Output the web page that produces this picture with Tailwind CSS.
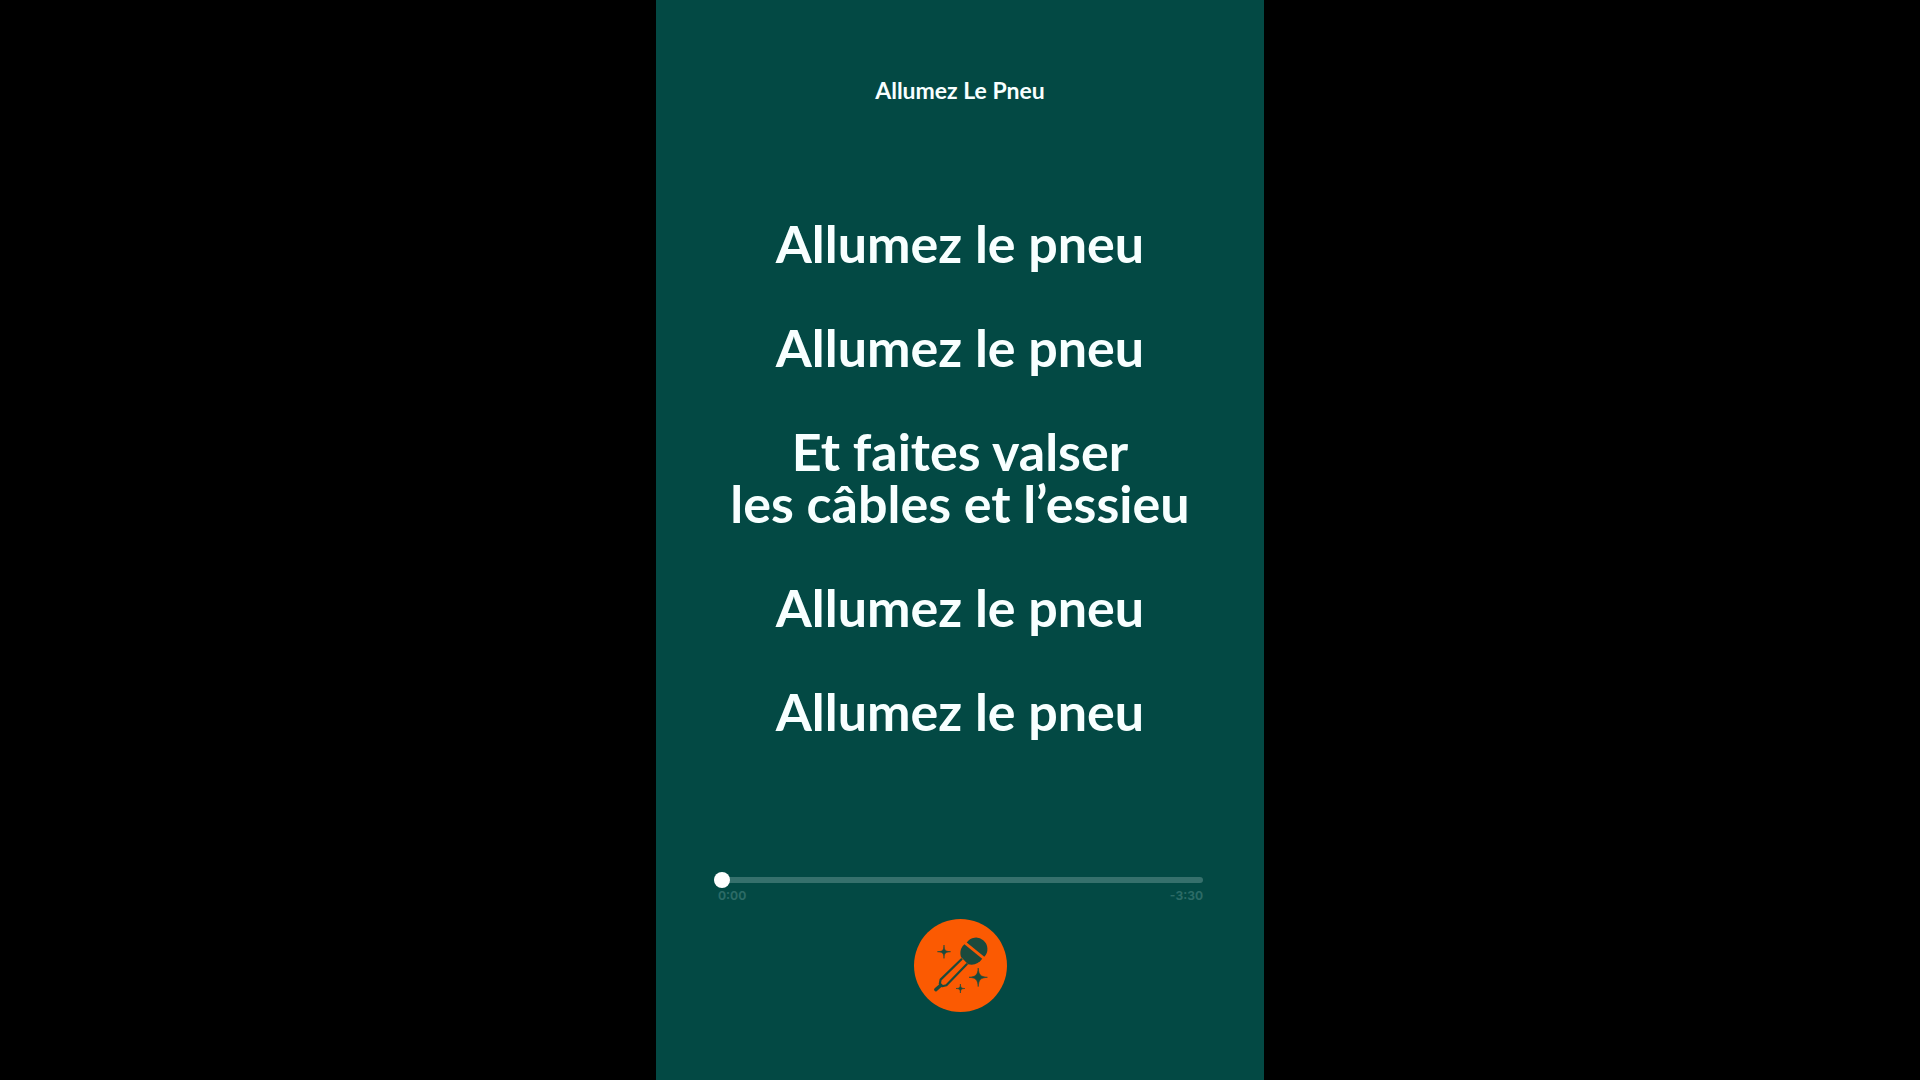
<!DOCTYPE html>
<html lang="fr">
<head>
  <meta charset="UTF-8" />
  <meta name="viewport" content="width=device-width, initial-scale=1.0" />
  <title>Allumez Le Pneu</title>
  <script src="https://cdn.jsdelivr.net/npm/@tailwindcss/browser@4"></script>
</head>
<body class="bg-black flex justify-center min-h-screen font-['Lato',sans-serif]">
  <main class="bg-[#034944] text-[#f8ffff] w-full max-w-[608px] min-h-screen flex flex-col items-center justify-between pt-19 pb-17">

    <h1 class="text-[23px] leading-7 font-bold text-center">Allumez Le Pneu</h1>

    <!-- Lyrics -->
    <section class="flex flex-col gap-13 pb-[22px] text-[52px] leading-[52px] font-bold text-center">
      <p>Allumez le pneu</p>
      <p>Allumez le pneu</p>
      <p>Et faites valser<br />les câbles et l’essieu</p>
      <p>Allumez le pneu</p>
      <p>Allumez le pneu</p>
    </section>

    <!-- Player -->
    <section class="w-full px-14 flex flex-col items-center">
      <div class="w-full pl-0.5 pr-[5px]">
        <input id="seek" type="range" min="0" max="210" value="0" aria-label="Position"
          class="block w-full h-4 appearance-none bg-transparent cursor-pointer [&::-webkit-slider-runnable-track]:h-1.5 [&::-webkit-slider-runnable-track]:rounded-full [&::-webkit-slider-runnable-track]:bg-[#36706c] [&::-webkit-slider-thumb]:appearance-none [&::-webkit-slider-thumb]:size-4 [&::-webkit-slider-thumb]:-mt-[5px] [&::-webkit-slider-thumb]:rounded-full [&::-webkit-slider-thumb]:bg-white" />
        <div class="flex justify-between pl-1 font-['Inter',sans-serif] text-xs leading-4 font-bold text-[#2b6b66]">
          <span id="elapsed">0:00</span>
          <span id="remaining">-3:30</span>
        </div>
      </div>

      <button type="button" aria-label="Chanter" class="mt-[15px] size-[93px] rounded-full bg-[#fb5a02] cursor-pointer">
        <svg viewBox="14 14 93 93" class="size-full" fill="#1b4a3d">
          <!-- head -->
          <path d="M66.7 37.4 A11.4 11.4 0 1 1 84.3 51.8 Z" />
          <path d="M64.4 39.2 L82.2 53.8 C79 58.6 74 60.6 68 59.2 L61 52 C59.4 47 61 42 64.4 39.2 Z" />
          <!-- handle -->
          <path d="M62 53.8 L40.6 74.6 L39.8 78.8 L42.2 81.2 L46.4 80.2 L67.2 58.8" fill="none" stroke="#1b4a3d" stroke-width="2.2" stroke-linejoin="round" />
          <path d="M40.8 80.2 L35.8 84.6" fill="none" stroke="#1b4a3d" stroke-width="3.4" stroke-linecap="round" />
          <!-- sparkles -->
          <g stroke="#1b4a3d" stroke-width=".6">
            <path d="M44 40 C44.3 45.5 45.2 46.4 50.6 46.7 C45.2 47 44.3 47.9 44 53.4 C43.7 47.9 42.8 47 37.4 46.7 C42.8 46.4 43.7 45.5 44 40 Z" />
            <path d="M78.2 63 C78.8 70 80.4 71.7 87.4 72.3 C80.4 72.9 78.8 74.6 78.2 81.6 C77.6 74.6 76 72.9 69 72.3 C76 71.7 77.6 70 78.2 63 Z" />
            <path d="M60.4 79 C60.6 82.6 61.2 83.3 64.8 83.5 C61.2 83.7 60.6 84.4 60.4 88 C60.2 84.4 59.6 83.7 56 83.5 C59.6 83.3 60.2 82.6 60.4 79 Z" />
          </g>
        </svg>
      </button>
    </section>
  </main>

  <script>
    const seek = document.getElementById("seek");

    function formatTime(s) {
      return Math.floor(s / 60) + ":" + String(s % 60).padStart(2, "0");
    }

    seek.addEventListener("input", () => {
      document.getElementById("elapsed").innerText = formatTime(+seek.value);
      document.getElementById("remaining").innerText = "-" + formatTime(seek.max - seek.value);
    });
  </script>
</body>
</html>
